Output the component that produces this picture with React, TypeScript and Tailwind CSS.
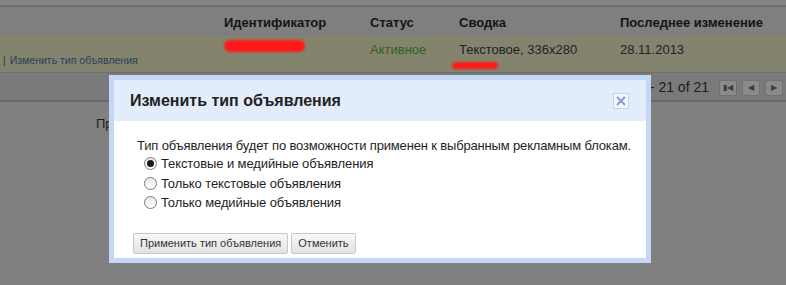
import React from "react";

const font = { fontFamily: '"Liberation Sans", Arial, sans-serif' };

const PagerButton: React.FC<{ children: React.ReactNode }> = ({ children }) => (
  <div className="w-[18px] h-[16px] flex items-center justify-center border border-[#717171] bg-[#8b8b8b] rounded-[2px] text-[8px] leading-none text-[#3c3c3c]">
    {children}
  </div>
);

const Radio: React.FC<{ checked?: boolean; label: string }> = ({ checked, label }) => (
  <label className="flex items-center h-[19.5px] gap-[4px] tracking-[-0.1px]">
    <span className="w-[13px] h-[13px] rounded-full border border-[#7a7a7a] bg-gradient-to-b from-[#e8e8e8] to-white flex items-center justify-center">
      {checked && <span className="w-[7px] h-[7px] rounded-full bg-[#1a1a1a]" />}
    </span>
    <span>{label}</span>
  </label>
);

const dlgButton =
  "h-[21px] px-[6px] text-[11px] text-[#333] border border-[#c8c8c8] rounded-[2px] bg-gradient-to-b from-[#f8f8f8] to-[#e2e2e2]";

export default function App() {
  return (
    <div className="relative w-[786px] h-[285px] overflow-hidden bg-[#808080] text-[13px] text-[#1c1c1c]" style={font}>
      {/* dimmed page behind the dialog */}
      <div className="h-[7px] bg-[#858585] border-b-2 border-[#6c6c6c]" />

      <div className="flex h-[29px] items-center pt-[3px] bg-[#7f7f7f] font-bold text-[13px] text-[#141414]">
        <div className="w-[224px]" />
        <div className="w-[146px]">Идентификатор</div>
        <div className="w-[89px]">Статус</div>
        <div className="w-[161px]">Сводка</div>
        <div>Последнее изменение</div>
      </div>

      <div className="flex h-[37px] bg-[#84836e] border-b border-[#6f6f6f]">
        <div className="w-[224px] flex items-end pb-[3px] pl-[3px] text-[10.5px] text-[#24405e]">
          <span className="text-[#3a3a2e] mr-[4px]">|</span>
          <span>Изменить тип объявления</span>
        </div>
        <div className="w-[146px] pt-[4px]">
          <div className="w-[81px] h-[12px] rounded-full bg-[#ff1a1a] blur-[1px]" />
        </div>
        <div className="w-[89px] pt-[4px] text-[#2a6420]">Активное</div>
        <div className="w-[161px] pt-[4px] text-[#222]">
          <div>Текстовое, 336x280</div>
          <div className="ml-[-7px] mt-[2px] w-[46px] h-[7px] rounded-full bg-[#ff1a1a] blur-[1px]" />
        </div>
        <div className="pt-[4px] text-[#222]">28.11.2013</div>
      </div>

      <div className="flex h-[29px] items-center justify-end gap-[5px] pr-[3px] pt-[2px] bg-[#7a7a7a] border-b-2 border-[#696969]">
        <span className="mr-[5px] text-[14px] text-[#1c1c1c]">1 - 21 of 21</span>
        <PagerButton>▮◀</PagerButton>
        <PagerButton>◀</PagerButton>
        <PagerButton>▶</PagerButton>
      </div>

      <div className="pl-[96px] pt-[12px] text-[#1c1c1c]">Пр</div>

      {/* dialog */}
      <div className="absolute left-[109px] top-[75px] w-[542px] h-[188px] border-[5px] border-[#c4d8f6] bg-white flex flex-col">
        <div className="h-[41px] bg-[#e3ecfb] flex items-center justify-between pl-[16px] pr-[17px]">
          <h2 className="text-[16px] font-bold text-[#222]">Изменить тип объявления</h2>
          <button className="w-[16px] h-[16px] border border-[#c6d2e6] bg-[#f2f6fd] flex items-center justify-center">
            <svg width="10" height="10" viewBox="0 0 10 10">
              <path d="M1 1 L9 9 M9 1 L1 9" stroke="#8c98d4" strokeWidth="2" />
            </svg>
          </button>
        </div>
        <div className="flex-1 pl-[23px] pt-[16px] text-[13px] text-[#1e1e1e]">
          <p className="leading-[17px] tracking-[-0.16px]">
            Тип объявления будет по возможности применен к выбранным рекламным блокам.
          </p>
          <div className="pl-[7px] flex flex-col">
            <Radio checked label="Текстовые и медийные объявления" />
            <Radio label="Только текстовые объявления" />
            <Radio label="Только медийные объявления" />
          </div>
          <div className="flex gap-[3px] mt-[20px] ml-[-4px]">
            <button className={dlgButton}>Применить тип объявления</button>
            <button className={dlgButton}>Отменить</button>
          </div>
        </div>
      </div>
    </div>
  );
}
